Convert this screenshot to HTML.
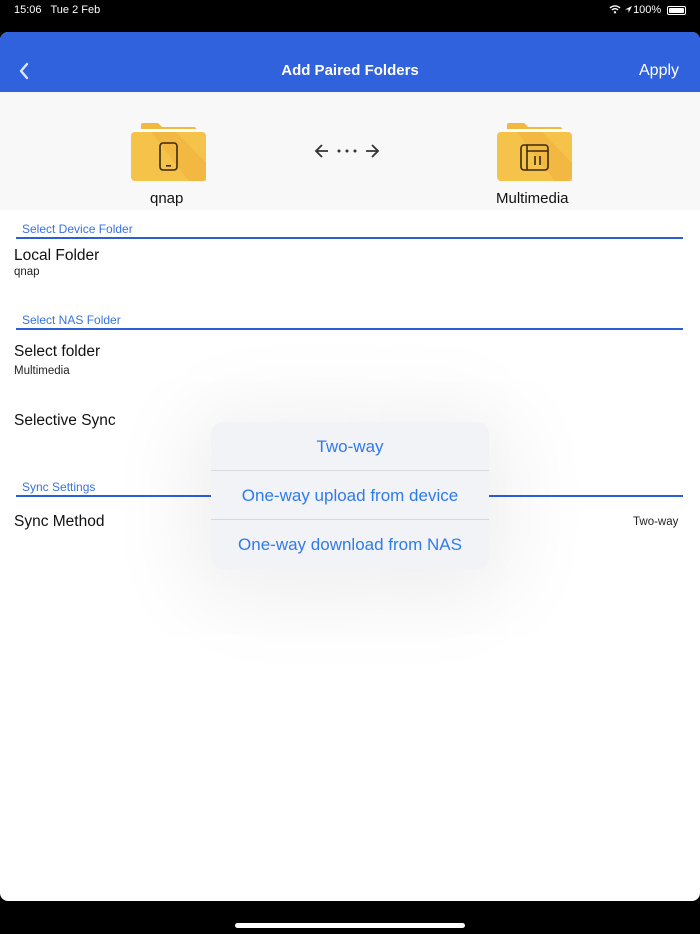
<!DOCTYPE html>
<html><head><meta charset="utf-8"><style>
*{margin:0;padding:0;box-sizing:border-box}
body{width:700px;height:934px;background:#000;position:relative;overflow:hidden;font-family:"Liberation Sans",sans-serif}
.abs{position:absolute}
.status{color:#fff;font-size:11px;top:4px}
.page{left:0;top:32px;width:700px;height:869px;background:#fff;border-radius:8px;overflow:hidden}
.nav{left:0;top:0;width:700px;height:60px;background:#2f62dc;color:#fff}
.hdr{left:0;top:60px;width:700px;height:118px;background:#f8f8f8}
.sec{color:#3a72e0;font-size:12px;left:22px}
.line{left:16px;width:667px;height:2px;background:#2c5fd6}
.t{color:#111;font-size:15.5px;left:14px}
.s{color:#222;font-size:11.5px;left:14px}
.sheet{left:211px;top:390px;width:278px;height:147px;background:#f2f3f6;border-radius:12px;box-shadow:0 10px 90px 20px rgba(0,0,0,0.07);overflow:hidden}
.opt{height:49px;line-height:49px;text-align:center;color:#2f7bea;font-size:17px;border-bottom:1px solid #d8d8dc}
</style></head><body>
<div class="abs status" style="left:14px">15:06&nbsp;&nbsp; Tue 2 Feb</div>
<div class="abs status" style="left:609px">
<svg width="12" height="10" viewBox="0 0 12 10" style="vertical-align:-1px"><path d="M1 4a7 7 0 0 1 10 0M3 6a4 4 0 0 1 6 0" stroke="#fff" stroke-width="1.4" fill="none"/><circle cx="6" cy="8.3" r="1.2" fill="#fff"/></svg>
<svg width="9" height="9" viewBox="0 0 9 9" style="vertical-align:-1px"><path d="M8 1L1 4.5h3.5V8z" fill="#fff"/></svg>100%</div>
<div class="abs" style="left:667px;top:6px;width:19px;height:9px;border:1px solid #fff;border-radius:2px;padding:1px"><div style="background:#fff;width:100%;height:100%;border-radius:1px"></div></div>
<div class="abs page">
 <div class="abs nav">
  <svg class="abs" style="left:18px;top:30px" width="12" height="18" viewBox="0 0 12 18"><path d="M9 2L3 9l6 7" stroke="#dfe6fb" stroke-width="2.4" fill="none" stroke-linecap="round" stroke-linejoin="round"/></svg>
  <div class="abs" style="left:0;width:700px;top:30px;text-align:center;font-size:15px;font-weight:bold">Add Paired Folders</div>
  <div class="abs" style="left:639px;top:30px;font-size:16px">Apply</div>
 </div>
 <div class="abs hdr">
  <svg class="abs" style="left:131px;top:31px" width="75" height="58" viewBox="0 0 75 58"><path d="M10 2q0-2 2-2h14q2 0 3 2l2 2h32q2 0 2 2v10H10z" fill="#f2b93e"/><rect x="3" y="6" width="69" height="6" fill="#fff"/><rect x="0" y="9" width="75" height="49" rx="4" fill="#f5c24a"/><path d="M20 9h25L75 40v18H58z" fill="#f0b13d" opacity=".6"/><rect x="29" y="20" width="17" height="27" rx="3" fill="none" stroke="#3b2b10" stroke-width="1.6"/><rect x="35" y="42" width="5" height="1.6" fill="#3b2b10"/></svg>
  <div class="abs" style="left:150px;top:98px;font-size:15px;color:#111">qnap</div>
  <svg class="abs" style="left:314px;top:51px" width="66" height="16" viewBox="0 0 66 16"><path d="M2 8h12M8 2L2 8l6 6M52 8h12M58 2l6 6-6 6" stroke="#333" stroke-width="1.8" fill="none"/><circle cx="25" cy="8" r="1.5" fill="#333"/><circle cx="33" cy="8" r="1.5" fill="#333"/><circle cx="41" cy="8" r="1.5" fill="#333"/></svg>
  <svg class="abs" style="left:497px;top:31px" width="75" height="58" viewBox="0 0 75 58"><path d="M10 2q0-2 2-2h14q2 0 3 2l2 2h32q2 0 2 2v10H10z" fill="#f2b93e"/><rect x="3" y="6" width="69" height="6" fill="#fff"/><rect x="0" y="9" width="75" height="49" rx="4" fill="#f5c24a"/><path d="M20 9h25L75 40v18H58z" fill="#f0b13d" opacity=".6"/><rect x="24" y="22" width="27" height="25" rx="3" fill="none" stroke="#3b2b10" stroke-width="1.6"/><path d="M30 22v25M30 28h21M38 33v9M43 33v9" stroke="#3b2b10" stroke-width="1.6"/></svg>
  <div class="abs" style="left:496px;top:98px;font-size:15px;color:#111">Multimedia</div>
 </div>
 <div class="abs sec" style="top:190px">Select Device Folder</div>
 <div class="abs line" style="top:205px"></div>
 <div class="abs t" style="top:215px">Local Folder</div>
 <div class="abs s" style="top:234px">qnap</div>
 <div class="abs sec" style="top:281px">Select NAS Folder</div>
 <div class="abs line" style="top:296px"></div>
 <div class="abs t" style="top:311px">Select folder</div>
 <div class="abs s" style="top:333px">Multimedia</div>
 <div class="abs t" style="top:380px">Selective Sync</div>
 <div class="abs sec" style="top:448px">Sync Settings</div>
 <div class="abs line" style="top:463px"></div>
 <div class="abs t" style="top:481px">Sync Method</div>
 <div class="abs s" style="left:633px;top:484px">Two-way</div>
 <div class="abs sheet">
  <div class="opt">Two-way</div>
  <div class="opt">One-way upload from device</div>
  <div class="opt" style="border:none">One-way download from NAS</div>
 </div>
</div>
<div class="abs" style="left:235px;top:923px;width:230px;height:5px;border-radius:3px;background:#fff"></div>
</body></html>
